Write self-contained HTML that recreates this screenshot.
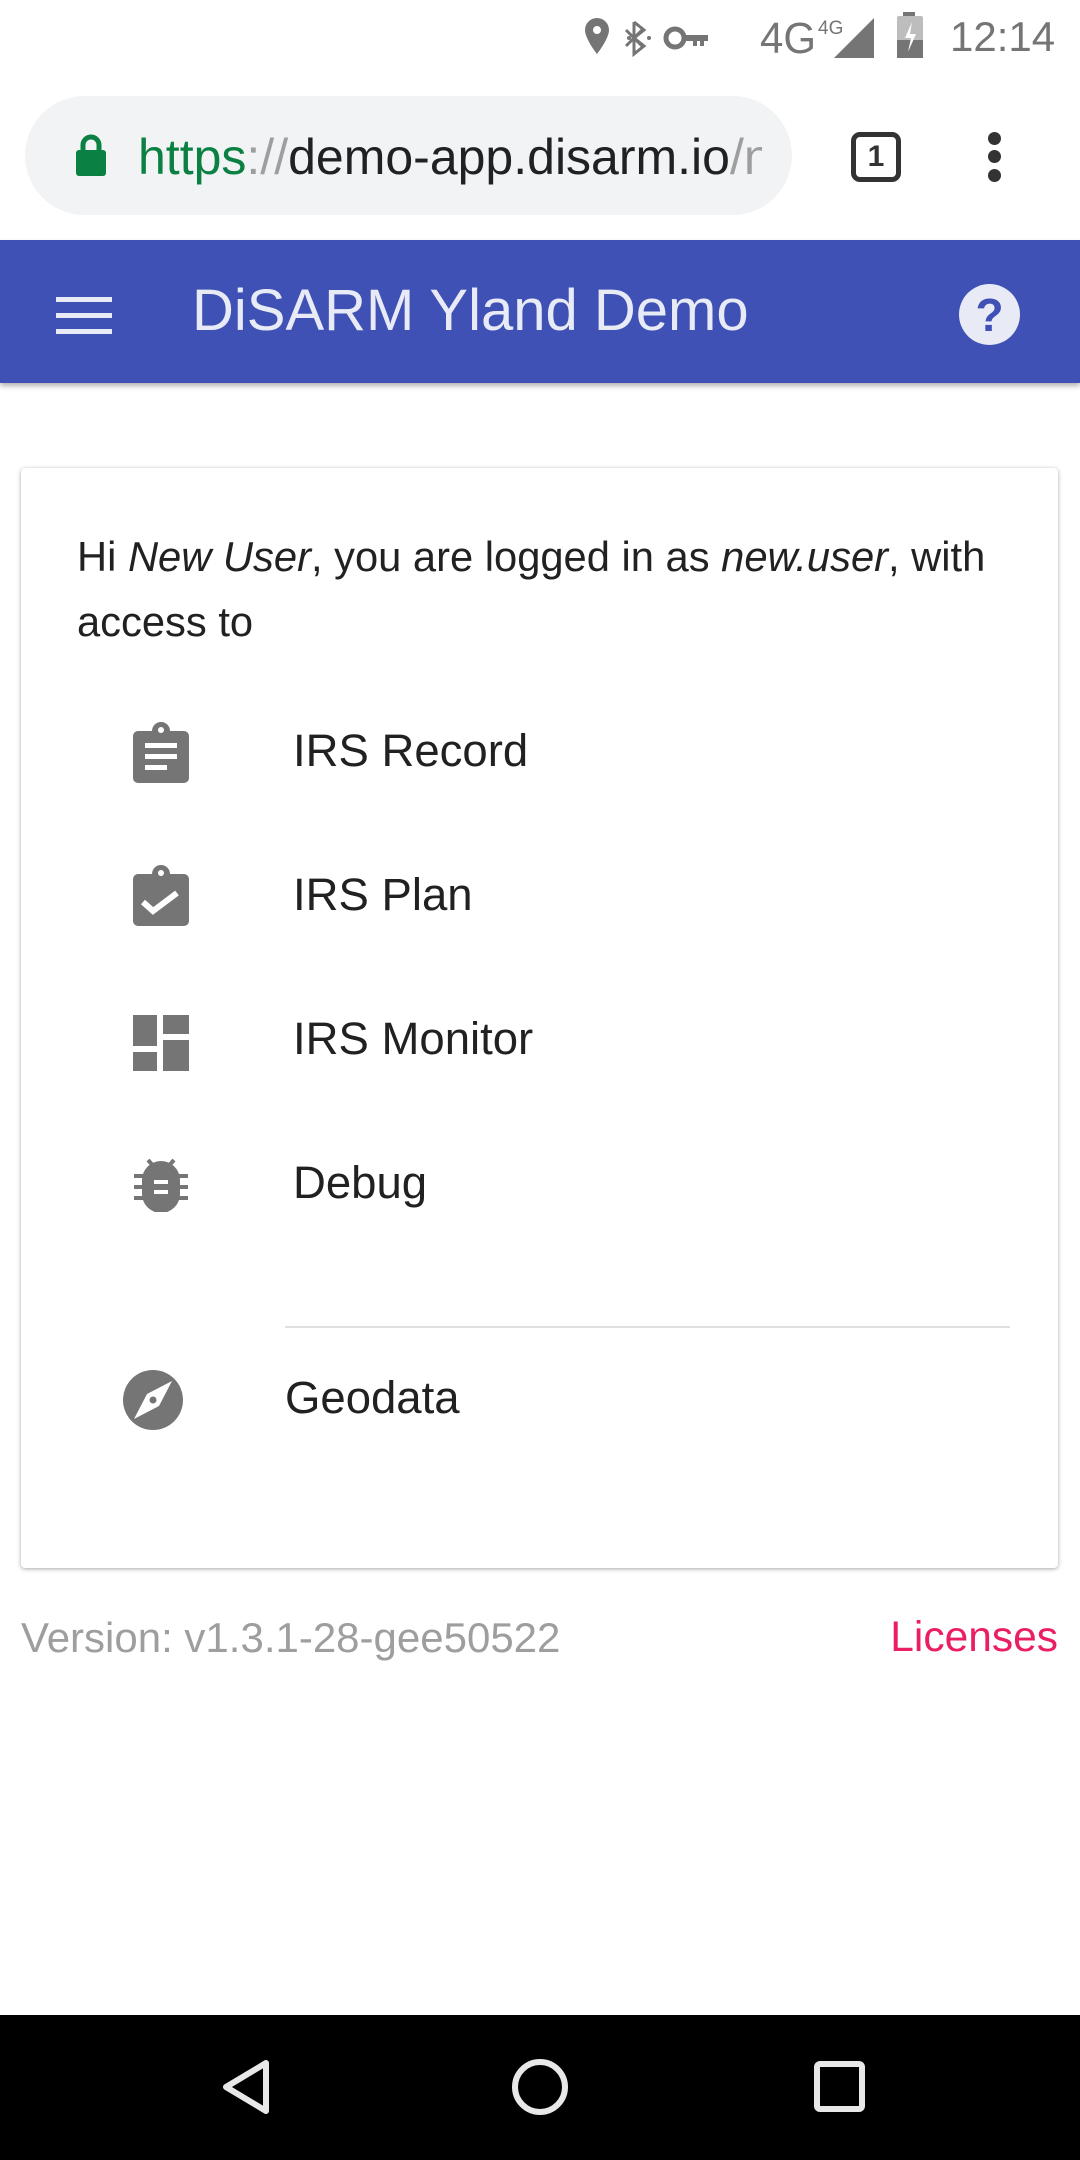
<!DOCTYPE html>
<html><head><meta charset="utf-8">
<style>
*{margin:0;padding:0;box-sizing:border-box}
body{width:1080px;height:2160px;background:#fff;position:relative;overflow:hidden;font-family:"Liberation Sans",sans-serif}
.a{position:absolute;white-space:nowrap}
</style></head><body>
<!-- status bar -->
<div class="a" style="left:0;top:0;width:1080px;height:77px;background:#fff"></div>
<svg class="a" style="left:580px;top:14px" width="330" height="48" viewBox="0 0 330 48">
 <path d="M17 4a12 12 0 0 0-12 12c0 9 12 24 12 24s12-15 12-24A12 12 0 0 0 17 4zm0 16a4 4 0 1 1 0-8 4 4 0 0 1 0 8z" fill="#757575"/>
 <path d="M54 8l10 8-10 8 10 8-10 8V8M46 16l16 16M46 32l16-16" stroke="#757575" stroke-width="3" fill="none"/>
 <circle cx="49" cy="24" r="2" fill="#757575"/><circle cx="69" cy="24" r="2" fill="#757575"/>
 <circle cx="95" cy="24" r="9" fill="none" stroke="#757575" stroke-width="5"/>
 <path d="M104 21h24v6h-4v5h-4v-5h-3v5h-4v-5h-9z" fill="#757575"/>
 <text x="180" y="39" font-size="44" fill="#757575" font-family="Liberation Sans" textLength="56" lengthAdjust="spacingAndGlyphs">4G</text>
 <text x="238" y="20" font-size="19" fill="#757575" font-family="Liberation Sans">4G</text>
 <path d="M254 44L294 4v40z" fill="#757575"/>
</svg>
<svg class="a" style="left:897px;top:12px" width="30" height="48" viewBox="0 0 30 48">
 <rect x="6" y="0" width="12" height="6" fill="#757575"/>
 <rect x="0" y="4" width="26" height="42" rx="2" fill="#bdbdbd"/>
 <rect x="0" y="28" width="26" height="18" fill="#757575"/>
 <path d="M15 10l-7 16h6l-3 14 8-18h-6z" fill="#fff"/>
</svg>
<div class="a" style="left:950px;top:13px;font-size:42px;color:#757575">12:14</div>
<!-- url bar -->
<div class="a" style="left:25px;top:96px;width:767px;height:119px;border-radius:60px;background:#f1f3f4"></div>
<svg class="a" style="left:74px;top:133px" width="34" height="44" viewBox="0 0 34 44">
 <path d="M9 18v-6a8 8 0 0 1 16 0v6" stroke="#0b8043" stroke-width="5" fill="none"/>
 <rect x="2" y="17" width="30" height="26" rx="3" fill="#0b8043"/>
</svg>
<div class="a" style="left:138px;top:128px;font-size:50px;width:624px;overflow:hidden"><span style="color:#0b8043">https</span><span style="color:#9e9e9e">://</span><span style="color:#202124">demo-app.disarm.io</span><span style="color:#9e9e9e">/n</span></div>
<div class="a" style="left:851px;top:132px;width:50px;height:50px;border:5px solid #333;border-radius:9px;font-size:30px;font-weight:bold;color:#333;text-align:center;line-height:40px">1</div>
<div class="a" style="left:988px;top:132px;width:13px;height:13px;border-radius:50%;background:#333"></div>
<div class="a" style="left:988px;top:150px;width:13px;height:13px;border-radius:50%;background:#333"></div>
<div class="a" style="left:988px;top:169px;width:13px;height:13px;border-radius:50%;background:#333"></div>
<!-- app bar -->
<div class="a" style="left:0;top:240px;width:1080px;height:143px;background:#3f51b5;box-shadow:0 3px 5px rgba(0,0,0,.3)"></div>
<div class="a" style="left:56px;top:297px;width:56px;height:5px;background:#e8eaf6"></div>
<div class="a" style="left:56px;top:313px;width:56px;height:5px;background:#e8eaf6"></div>
<div class="a" style="left:56px;top:329px;width:56px;height:5px;background:#e8eaf6"></div>
<div class="a" style="left:192px;top:277px;font-size:58px;color:#e8eaf6">DiSARM Yland Demo</div>
<div class="a" style="left:959px;top:284px;width:61px;height:61px;border-radius:50%;background:#e8eaf6;color:#3f51b5;font-size:46px;font-weight:bold;text-align:center;line-height:62px">?</div>
<!-- card -->
<div class="a" style="left:21px;top:468px;width:1037px;height:1100px;background:#fff;border-radius:4px;box-shadow:0 1px 4px rgba(0,0,0,.35)"></div>
<div class="a" style="left:77px;top:524px;font-size:41.7px;color:#212121;line-height:65px;white-space:normal;width:960px">Hi <i>New User</i>, you are logged in as <i>new.user</i>, with access to</div>
<!-- icons -->
<svg class="a" style="left:133px;top:721px" width="56" height="64" viewBox="0 0 56 64">
 <path d="M5 10h14a9 9 0 0 1 18 0h14a5 5 0 0 1 5 5v42a5 5 0 0 1-5 5H5a5 5 0 0 1-5-5V15a5 5 0 0 1 5-5z" fill="#757575"/>
 <circle cx="28" cy="9" r="3" fill="#fff"/>
 <rect x="12" y="22" width="32" height="5" fill="#fff"/><rect x="12" y="33" width="32" height="5" fill="#fff"/><rect x="12" y="44" width="22" height="5" fill="#fff"/>
</svg>
<svg class="a" style="left:133px;top:864px" width="56" height="64" viewBox="0 0 56 64">
 <path d="M5 10h14a9 9 0 0 1 18 0h14a5 5 0 0 1 5 5v42a5 5 0 0 1-5 5H5a5 5 0 0 1-5-5V15a5 5 0 0 1 5-5z" fill="#757575"/>
 <circle cx="28" cy="9" r="3" fill="#fff"/>
 <path d="M10 38l10 9 24-18" stroke="#fff" stroke-width="6" fill="none"/>
</svg>
<svg class="a" style="left:133px;top:1015px" width="56" height="56" viewBox="0 0 56 56">
 <rect x="0" y="0" width="24" height="31" fill="#757575"/><rect x="0" y="37" width="24" height="19" fill="#757575"/>
 <rect x="30" y="0" width="26" height="19" fill="#757575"/><rect x="30" y="25" width="26" height="31" fill="#757575"/>
</svg>
<svg class="a" style="left:134px;top:1158px" width="54" height="54" viewBox="0 0 54 54">
 <path d="M14 2l8 9h10l8-9" stroke="#757575" stroke-width="4" fill="none"/>
 <path d="M8 22a19 19 0 0 1 38 0v14a19 19 0 0 1-38 0z" fill="#757575"/>
 <rect x="0" y="16" width="54" height="4" fill="#757575"/><rect x="0" y="27" width="54" height="4" fill="#757575"/><rect x="0" y="38" width="54" height="4" fill="#757575"/>
 <rect x="20" y="22" width="14" height="4" fill="#fff"/><rect x="20" y="32" width="14" height="4" fill="#fff"/>
</svg>
<svg class="a" style="left:122px;top:1369px" width="62" height="62" viewBox="0 0 62 62">
 <circle cx="31" cy="31" r="30" fill="#757575"/>
 <path d="M12 50l13-25 25-13-13 25z" fill="#fff"/>
 <circle cx="31" cy="31" r="3.5" fill="#757575"/>
</svg>
<div class="a" style="left:293px;top:725px;font-size:45.5px;color:#212121">IRS Record</div>
<div class="a" style="left:293px;top:869px;font-size:45.5px;color:#212121">IRS Plan</div>
<div class="a" style="left:293px;top:1013px;font-size:45.5px;color:#212121">IRS Monitor</div>
<div class="a" style="left:293px;top:1157px;font-size:45.5px;color:#212121">Debug</div>
<div class="a" style="left:285px;top:1326px;width:725px;height:2px;background:#e0e0e0"></div>
<div class="a" style="left:285px;top:1372px;font-size:45.5px;color:#212121">Geodata</div>
<!-- footer -->
<div class="a" style="left:21px;top:1614px;font-size:42px;color:#9e9e9e">Version: v1.3.1-28-gee50522</div>
<div class="a" style="right:22px;top:1614px;font-size:42.5px;color:#e91e63">Licenses</div>
<!-- nav bar -->
<div class="a" style="left:0;top:2015px;width:1080px;height:145px;background:#000"></div>
<svg class="a" style="left:0;top:2015px" width="1080" height="145" viewBox="0 0 1080 145">
 <path d="M266 48L226 72l40 24z" stroke="#e8e8e8" stroke-width="6" stroke-linejoin="round" fill="none"/>
 <circle cx="540" cy="72" r="25" stroke="#e8e8e8" stroke-width="6" fill="none"/>
 <rect x="817" y="49" width="45" height="45" rx="3" stroke="#e8e8e8" stroke-width="6" fill="none"/>
</svg>
</body></html>
